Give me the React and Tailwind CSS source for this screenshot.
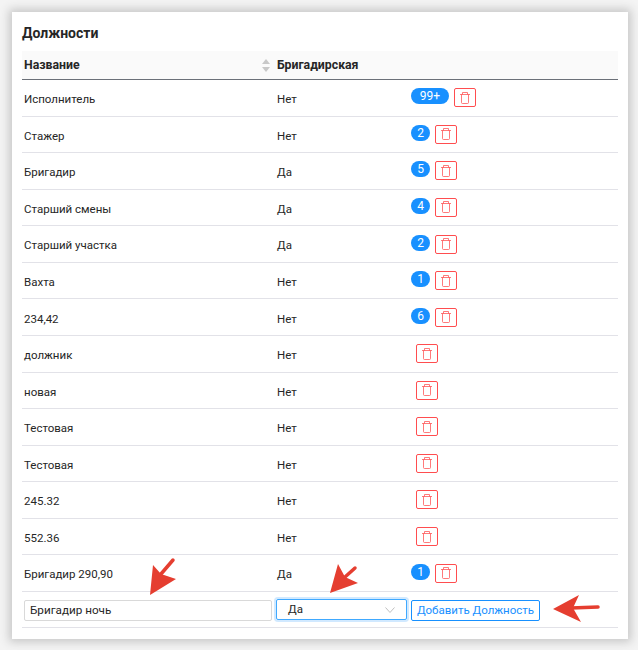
import React from "react";

const rows = [
  { name: "Исполнитель", brig: "Нет", count: "99+" },
  { name: "Стажер", brig: "Нет", count: "2" },
  { name: "Бригадир", brig: "Да", count: "5" },
  { name: "Старший смены", brig: "Да", count: "4" },
  { name: "Старший участка", brig: "Да", count: "2" },
  { name: "Вахта", brig: "Нет", count: "1" },
  { name: "234,42", brig: "Нет", count: "6" },
  { name: "должник", brig: "Нет" },
  { name: "новая", brig: "Нет" },
  { name: "Тестовая", brig: "Нет" },
  { name: "Тестовая", brig: "Нет" },
  { name: "245.32", brig: "Нет" },
  { name: "552.36", brig: "Нет" },
  { name: "Бригадир 290,90", brig: "Да", count: "1" },
];

const TrashIcon = () => (
  <svg width="10" height="12" viewBox="0 0 10 12" fill="none" stroke="#ff4d4f" strokeOpacity="0.75">
    <path d="M0 2.5h10" />
    <path d="M2.5 2.5V.5h5v2" />
    <path d="M1.5 2.5v8a1 1 0 0 0 1 1h5a1 1 0 0 0 1-1v-8" />
  </svg>
);

const DeleteButton = () => (
  <button className="flex h-[19px] w-[22px] items-center justify-center rounded-[2px] border border-[#ff4d4f] bg-white">
    <TrashIcon />
  </button>
);

const Badge = ({ count }) => (
  <span
    className={
      "flex h-4 items-center justify-center rounded-full bg-[#1890ff] text-[12px] leading-4 text-white " +
      (count.length > 1 ? "w-[38px]" : "w-[19px]")
    }
  >
    {count}
  </span>
);

// красные стрелки поверх скриншота
const Arrow = ({ className, width, height, tail, head }) => (
  <svg className={className} width={width} height={height} viewBox={`0 0 ${width} ${height}`}>
    <path d={tail} stroke="#e53e30" strokeWidth="3.5" strokeLinecap="round" fill="none" />
    <path d={head} fill="#e53e30" />
  </svg>
);

const Row = ({ row }) => (
  <div className="flex h-[36.57px] items-center border-b border-[#e2e2e8] text-[11.5px] text-[#262626]">
    <div className="w-[253px] pl-[2px] pt-[4px]">{row.name}</div>
    <div className="w-[134px] pl-[2px] pt-[4px]">{row.brig}</div>
    <div className={row.count ? "flex items-start gap-[5px] pl-[2px]" : "flex pl-[7px]"}>
      {row.count && <Badge count={row.count} />}
      <DeleteButton />
    </div>
  </div>
);

export default function App() {
  return (
    <div className="relative h-[650px] w-[638px] overflow-hidden bg-[#f4f4f4] pl-[12px] pt-[12px] font-['Roboto',sans-serif]">
      <div className="h-[627px] w-[616px] bg-white px-[10px] pt-[12px] shadow-[0_0_9px_3px_#c6c6c6]">
        <h2 className="h-[27px] text-[14px] font-bold leading-[19px] text-[#262626]">Должности</h2>
        <div className="flex h-[29px] items-center border-b border-[#6b7078] bg-[#fafafa] text-[12.3px] font-bold text-[#262626]">
          <div className="flex w-[253px] items-center justify-between pl-[2px] pr-[4px]">
            Название
            <svg width="10" height="13" viewBox="0 0 10 13" fill="#c8c8c8">
              <path d="M5 0l4 5H1z" />
              <path d="M5 13l4-5H1z" />
            </svg>
          </div>
          <div className="pl-[2px]">Бригадирская</div>
        </div>
        {rows.map((row, i) => (
          <Row key={i} row={row} />
        ))}
        <div className="flex h-[36.57px] items-center border-b border-[#e2e2e8] pl-[2px] text-[11.5px]">
          <input
            readOnly
            value="Бригадир ночь"
            className="mt-[1px] h-[21px] w-[248px] rounded-[2px] border border-[#d9d9d9] px-[5px] text-[11.7px] text-[#262626] outline-none"
          />
          <div className="ml-[4px] flex h-[21px] w-[131px] items-center justify-between rounded-[2px] border border-[#40a9ff] pl-[11px] pr-[11px] text-[#262626] shadow-[0_0_0_2px_rgba(24,144,255,0.2)]">
            Да
            <svg width="10" height="6" viewBox="0 0 10 6" fill="none" stroke="#bfbfbf">
              <path d="M.5.5l4.5 5 4.5-5" />
            </svg>
          </div>
          <button className="ml-[4px] mt-[1px] h-[21px] w-[129px] rounded-[2px] border border-[#1890ff] bg-white text-[11.5px] text-[#1890ff]">
            Добавить Должность
          </button>
        </div>
      </div>
      <Arrow
        className="absolute left-[148px] top-[556px]"
        width={30}
        height={42}
        tail="M13 18L25 4"
        head="M2 39L5 9L13 18L28 23Z"
      />
      <Arrow
        className="absolute left-[328px] top-[562px]"
        width={32}
        height={33}
        tail="M17 15L27 6"
        head="M2 31L10 2L17 15L30 21Z"
      />
      <Arrow
        className="absolute left-[551px] top-[593px]"
        width={50}
        height={31}
        tail="M20 15L47 14"
        head="M2 16L28 2L22 15L30 29Z"
      />
    </div>
  );
}
